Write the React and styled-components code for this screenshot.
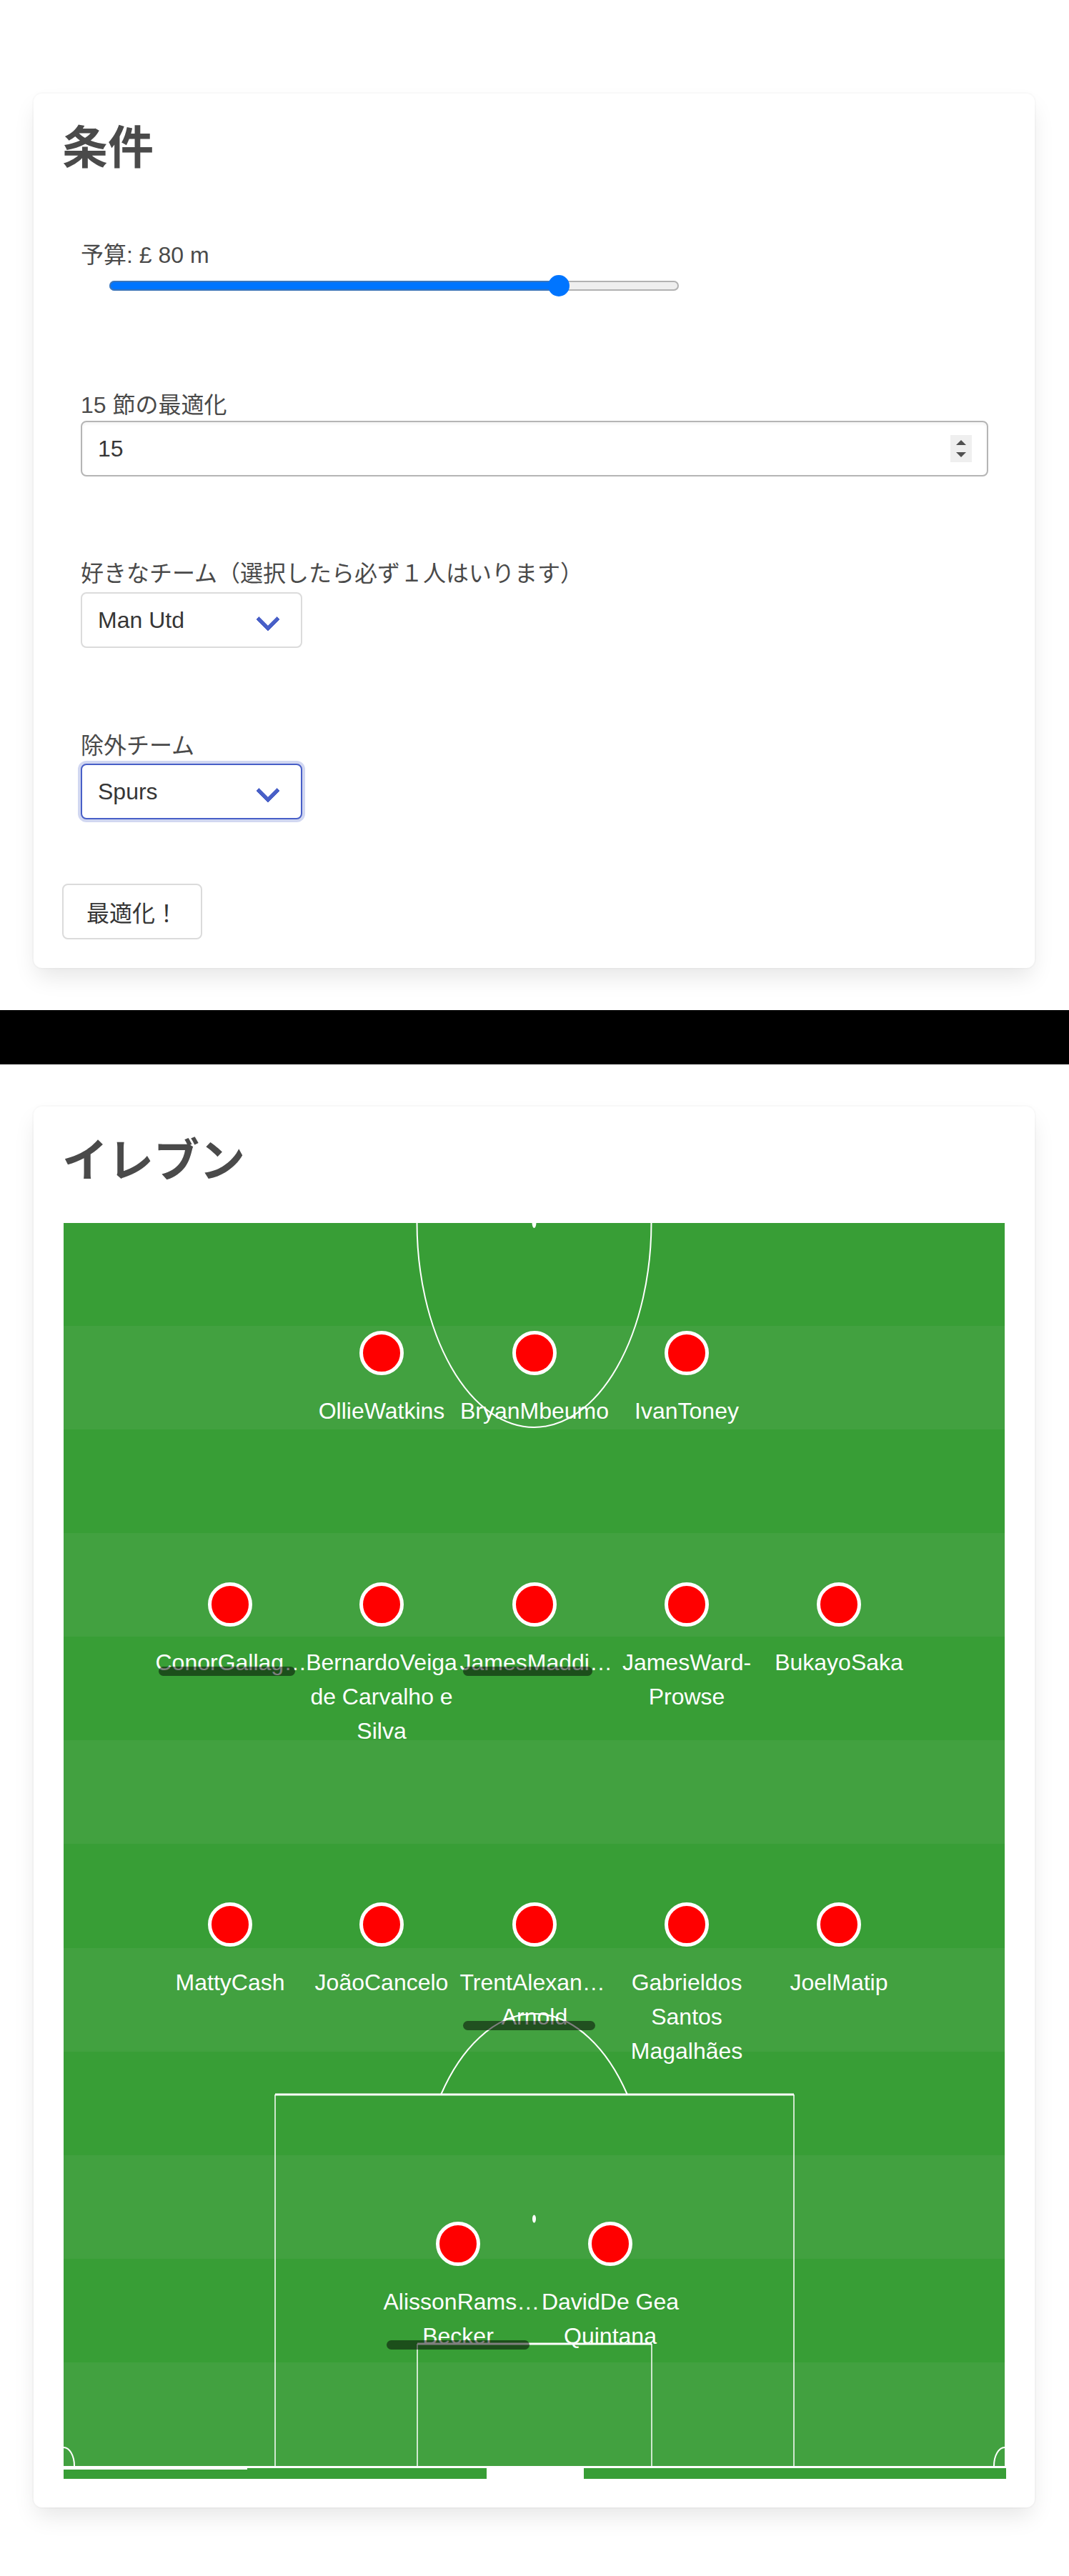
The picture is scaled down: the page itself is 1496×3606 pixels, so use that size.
import React from "react";
import styled, { createGlobalStyle, css } from "styled-components";

const GlobalStyle = createGlobalStyle`
  * { box-sizing: border-box; }
  html, body {
    margin: 0;
    padding: 0;
    background: #ffffff;
  }
  body {
    font-family: "Liberation Sans", "Noto Sans CJK JP", sans-serif;
    font-size: 32px;
    line-height: 1.5;
    color: #4a4a4a;
  }
`;

const Page = styled.div`
  padding: 131px 0 96px;
`;

const Section = styled.section`
  padding: 0 48px 0 47px;
`;

const Box = styled.div`
  background: #fff;
  border-radius: 12px;
  padding: 40px;
  box-shadow: 0 16px 32px -4px rgba(10, 10, 10, 0.1),
    0 0 0 2px rgba(10, 10, 10, 0.02);
`;

const Title = styled.h1`
  margin: 0;
  font-size: 64px;
  line-height: 72px;
  font-weight: 600;
  color: #4a4a4a;
`;

const Divider = styled.div`
  height: 76px;
  margin: 59px 0;
  background: #000;
`;

/* ---------- 条件 form ---------- */

const Fields = styled.div`
  padding: 0 25px 0 26px;
`;

const Field = styled.div`
  margin-top: ${(p) => p.$top}px;
`;

const Label = styled.label`
  display: block;
  font-size: 32px;
  line-height: 40px;
  color: #4a4a4a;
  margin-bottom: ${(p) => p.$gap || 0}px;
`;

const Range = styled.input`
  -webkit-appearance: none;
  appearance: none;
  display: block;
  width: 797px;
  height: 46px;
  margin: 0 0 0 40px;
  padding: 0;
  background: transparent;
  &::-webkit-slider-runnable-track {
    height: 14px;
    border-radius: 7px;
    background: linear-gradient(
      to right,
      #0075ff 0 ${(p) => p.$fill}%,
      #efefef ${(p) => p.$fill}% 100%
    );
    box-shadow: inset 0 0 0 2px rgba(117, 117, 117, 0.5);
  }
  &::-webkit-slider-thumb {
    -webkit-appearance: none;
    width: 30px;
    height: 30px;
    margin-top: -8px;
    border: none;
    border-radius: 50%;
    background: #0075ff;
  }
`;

const NumberBox = styled.div`
  display: flex;
  align-items: center;
  height: 78px;
  padding: 0 21px 0 22px;
  border: 2px solid #b5b5b5;
  border-radius: 8px;
  background: #fff;
  box-shadow: inset 0 2px 4px rgba(10, 10, 10, 0.05);
`;

const NumberField = styled.input`
  flex: 1;
  min-width: 0;
  height: 100%;
  padding: 0;
  border: none;
  outline: none;
  background: transparent;
  font-family: inherit;
  font-size: 32px;
  color: #363636;
  -moz-appearance: textfield;
  &::-webkit-inner-spin-button,
  &::-webkit-outer-spin-button {
    -webkit-appearance: none;
    margin: 0;
  }
`;

const Spinner = styled.div`
  display: flex;
  flex-direction: column;
  align-items: center;
  justify-content: center;
  gap: 10px;
  width: 30px;
  height: 38px;
  background: #efefef;
`;

const Arrow = styled.span`
  width: 0;
  height: 0;
  border-left: 7px solid transparent;
  border-right: 7px solid transparent;
  ${(p) =>
    p.$down
      ? css`border-top: 7px solid #505050;`
      : css`border-bottom: 7px solid #505050;`}
`;

const SelectWrap = styled.div`
  position: relative;
  width: 310px;
  height: 78px;
  &::after {
    content: "";
    position: absolute;
    top: 50%;
    right: 36px;
    width: 18px;
    height: 18px;
    margin-top: -13px;
    border: 6px solid #485fc7;
    border-right: 0;
    border-top: 0;
    border-radius: 2px;
    transform: rotate(-45deg);
    pointer-events: none;
  }
`;

const Select = styled.select`
  -webkit-appearance: none;
  appearance: none;
  width: 100%;
  height: 100%;
  padding: 0 80px 0 22px;
  border: 2px solid ${(p) => (p.$active ? "#485fc7" : "#dbdbdb")};
  border-radius: 8px;
  background: #fff;
  font-family: "Liberation Sans", "Noto Sans CJK JP", sans-serif;
  font-size: 32px;
  color: #363636;
  outline: none;
  box-shadow: ${(p) =>
    p.$active ? "0 0 0 4px rgba(72, 95, 199, 0.25)" : "none"};
`;

const Button = styled.button`
  display: block;
  height: 78px;
  margin-top: 90px;
  padding: 0 32px;
  border: 2px solid #dbdbdb;
  border-radius: 8px;
  background: #fff;
  font-family: "Liberation Sans", "Noto Sans CJK JP", sans-serif;
  font-size: 32px;
  color: #363636;
  cursor: pointer;
`;

/* ---------- イレブン pitch ---------- */

const STRIPE = 1741 / 12;

const Pitch = styled.div`
  position: relative;
  height: 1744px;
  margin: 50px 2px 0;
  overflow: hidden;
  border-bottom: 3px solid #fff;
  background: repeating-linear-gradient(
    to bottom,
    #389e36 0 ${STRIPE}px,
    #42a140 ${STRIPE}px ${STRIPE * 2}px
  );
`;

const Markings = styled.svg`
  position: absolute;
  left: 0;
  top: 0;
  width: 1317px;
  height: 1741px;
  pointer-events: none;
`;

const GoalStrip = styled.div`
  position: relative;
  display: flex;
  justify-content: center;
  height: 15px;
  margin: 0 0 0 2px;
  background: #389e36;
  &::before {
    content: "";
    position: absolute;
    left: 0;
    top: 0;
    width: 257px;
    height: 2px;
    background: #fff;
  }
`;

const Goal = styled.div`
  width: 136px;
  background: #fff;
`;

const PlayerNode = styled.div`
  position: absolute;
  left: ${(p) => p.$x}px;
  top: ${(p) => p.$y - 31}px;
  width: 0;
  display: flex;
  flex-direction: column;
  align-items: center;
`;

const Dot = styled.div`
  flex-shrink: 0;
  width: 62px;
  height: 62px;
  border: 5px solid #fff;
  border-radius: 50%;
  background: #ff0000;
`;

const NameBox = styled.div`
  position: relative;
  flex-shrink: 0;
  width: 213px;
  margin-top: 26px;
  display: flex;
  flex-direction: column;
  align-items: center;
`;

const NameLine = styled.div`
  flex-shrink: 0;
  white-space: nowrap;
  font-family: "Liberation Sans", sans-serif;
  font-size: 32px;
  line-height: 48px;
  color: #fff;
  ${(p) =>
    p.$clipped &&
    css`
      align-self: stretch;
      text-align: left;
      padding-left: 2px;
    `}
`;

const ScrollThumb = styled.div`
  position: absolute;
  left: 6px;
  bottom: 5px;
  width: ${(p) => p.$w}px;
  height: 13px;
  border-radius: 7px;
  background: rgba(0, 0, 0, 0.5);
`;

const players = [
  { x: 445, y: 183, lines: ["OllieWatkins"] },
  { x: 659, y: 183, lines: ["BryanMbeumo"] },
  { x: 872, y: 183, lines: ["IvanToney"] },

  { x: 233, y: 535, lines: ["ConorGallag…"], clipped: true, thumb: 191 },
  { x: 445, y: 535, lines: ["BernardoVeiga", "de Carvalho e", "Silva"] },
  { x: 659, y: 535, lines: ["JamesMaddi…"], clipped: true, thumb: 181 },
  { x: 872, y: 535, lines: ["JamesWard-", "Prowse"] },
  { x: 1085, y: 535, lines: ["BukayoSaka"] },

  { x: 233, y: 983, lines: ["MattyCash"] },
  { x: 445, y: 983, lines: ["JoãoCancelo"] },
  { x: 659, y: 983, lines: ["TrentAlexan…", "Arnold"], clipped: true, thumb: 185 },
  { x: 872, y: 983, lines: ["Gabrieldos", "Santos", "Magalhães"] },
  { x: 1085, y: 983, lines: ["JoelMatip"] },

  { x: 552, y: 1430, lines: ["AlissonRams…", "Becker"], clipped: true, thumb: 200 },
  { x: 765, y: 1430, lines: ["DavidDe Gea", "Quintana"] },
];

const teams = [
  "Arsenal",
  "Aston Villa",
  "Bournemouth",
  "Brentford",
  "Brighton",
  "Burnley",
  "Chelsea",
  "Crystal Palace",
  "Everton",
  "Fulham",
  "Liverpool",
  "Luton",
  "Man City",
  "Man Utd",
  "Newcastle",
  "Nott'm Forest",
  "Sheffield Utd",
  "Spurs",
  "West Ham",
  "Wolves",
];

function TeamSelect({ value, active }) {
  return (
    <SelectWrap>
      <Select defaultValue={value} $active={active}>
        {teams.map((t) => (
          <option key={t} value={t}>
            {t}
          </option>
        ))}
      </Select>
    </SelectWrap>
  );
}

function PitchMarkings() {
  const cx = 1317 / 2;
  return (
    <Markings viewBox="0 0 1317 1741" fill="none" stroke="#fff">
      <line x1="0" y1="0" x2="1317" y2="0" strokeWidth="2" />
      <ellipse cx={cx} cy="0" rx="164" ry="287" strokeWidth="2" />
      <ellipse cx={cx} cy="0" rx="3" ry="8" fill="#fff" stroke="none" />

      <line x1="296" y1="1221" x2="1022" y2="1221" strokeWidth="3" />
      <line x1="296" y1="1221" x2="296" y2="1741" strokeWidth="1.5" />
      <line x1="1022" y1="1221" x2="1022" y2="1741" strokeWidth="1.5" />
      <path d={`M ${cx - 130.4} 1221 A 164 287 0 0 1 ${cx + 130.4} 1221`} strokeWidth="2" />
      <ellipse cx={cx} cy="1395" rx="2.5" ry="5.5" fill="#fff" stroke="none" />

      <line x1="495" y1="1570" x2="823" y2="1570" strokeWidth="3" />
      <line x1="495" y1="1570" x2="495" y2="1741" strokeWidth="1.5" />
      <line x1="823" y1="1570" x2="823" y2="1741" strokeWidth="1.5" />

      <ellipse cx="0" cy="1741" rx="15" ry="26" strokeWidth="2" />
      <ellipse cx="1317" cy="1741" rx="15" ry="26" strokeWidth="2" />
    </Markings>
  );
}

export default function App() {
  return (
    <Page>
      <GlobalStyle />
      <Section>
        <Box>
          <Title>条件</Title>
          <Fields>
            <Field $top={94}>
              <Label>予算: £ 80 m</Label>
              <Range type="range" min={0} max={100} defaultValue={80} $fill={78.9} />
            </Field>
            <Field $top={124}>
              <Label $gap={2}>15 節の最適化</Label>
              <NumberBox>
                <NumberField type="number" defaultValue={15} />
                <Spinner>
                  <Arrow />
                  <Arrow $down />
                </Spinner>
              </NumberBox>
            </Field>
            <Field $top={116}>
              <Label $gap={6}>好きなチーム（選択したら必ず１人はいります）</Label>
              <TeamSelect value="Man Utd" />
            </Field>
            <Field $top={117}>
              <Label $gap={5}>除外チーム</Label>
              <TeamSelect value="Spurs" active />
            </Field>
          </Fields>
          <Button type="button">最適化！</Button>
        </Box>
      </Section>

      <Divider />

      <Section>
        <Box>
          <Title>イレブン</Title>
          <Pitch>
            <PitchMarkings />
            {players.map((p) => (
              <PlayerNode key={p.lines.join("")} $x={p.x} $y={p.y}>
                <Dot />
                <NameBox>
                  {p.lines.map((line, i) => (
                    <NameLine key={line} $clipped={p.clipped && i === 0}>
                      {line}
                    </NameLine>
                  ))}
                  {p.thumb && <ScrollThumb $w={p.thumb} />}
                </NameBox>
              </PlayerNode>
            ))}
          </Pitch>
          <GoalStrip>
            <Goal />
          </GoalStrip>
        </Box>
      </Section>
    </Page>
  );
}
